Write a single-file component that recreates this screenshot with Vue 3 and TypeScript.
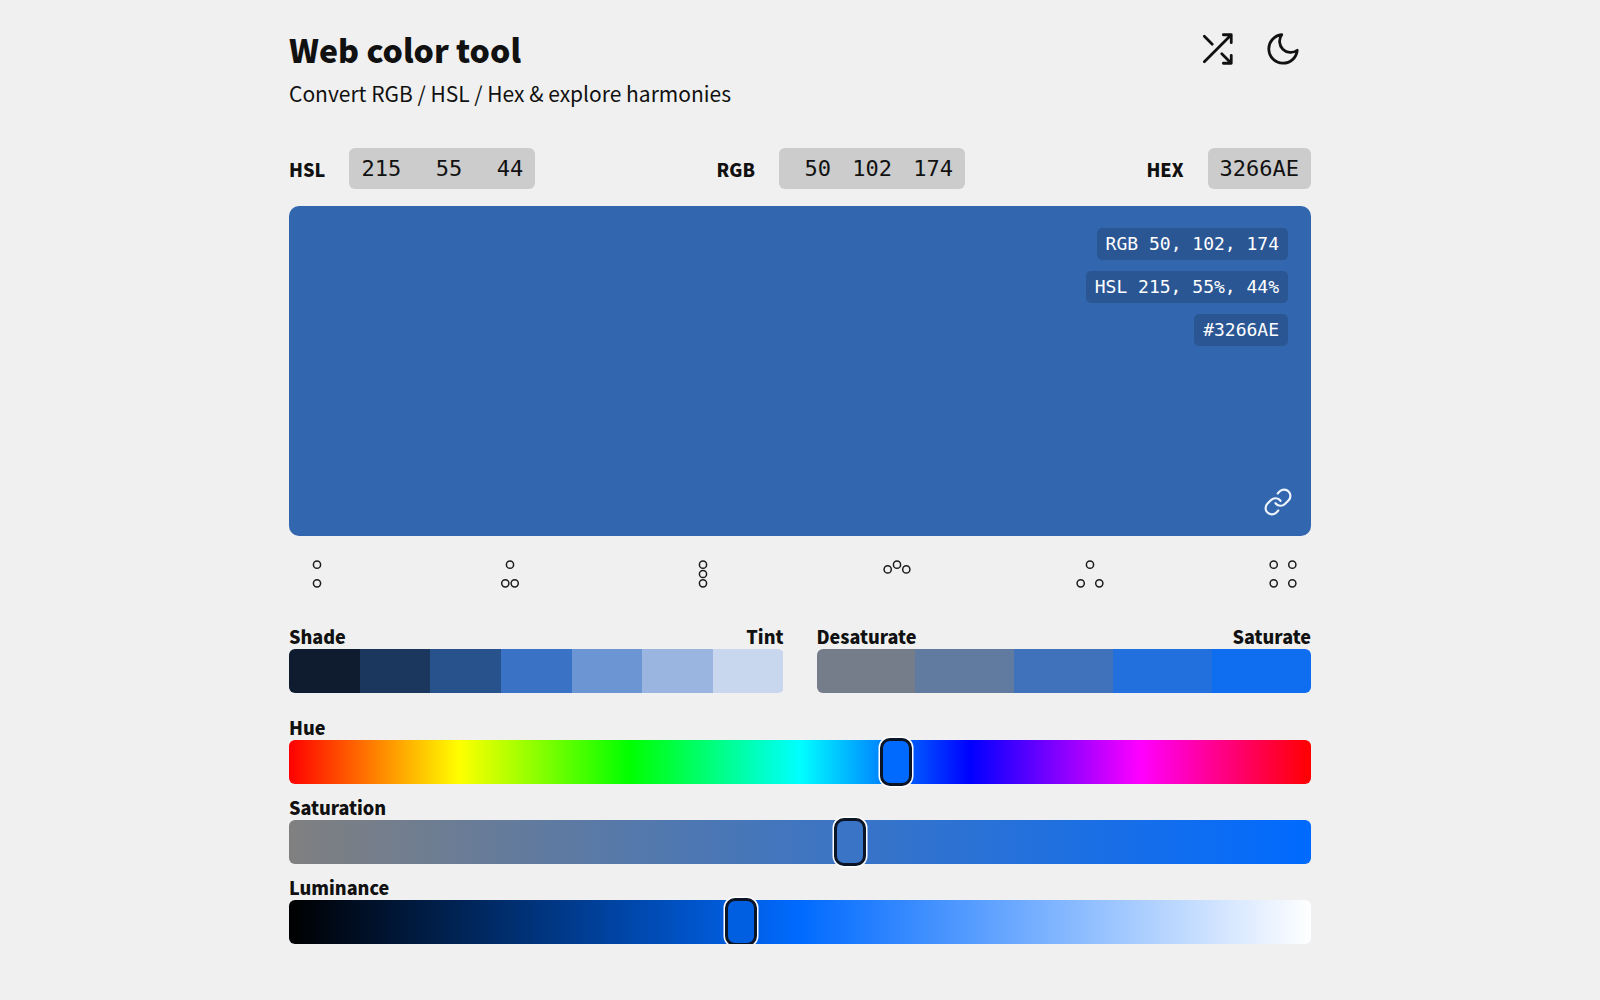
<script setup lang="ts">
import { ref, computed } from 'vue'

const hue = ref(215)
const sat = ref(55)
const lum = ref(44)

const rgb = [50, 102, 174]
const hex = '3266AE'

const hsl = (h: number, s: number, l: number) => `hsl(${h}, ${s}%, ${l}%)`

const shades = ['#0f1c2f', '#1c375e', '#28528c', '#3a73c5', '#6b95d3', '#9ab5e0', '#c8d7ed']
const saturates = ['#757c8a', '#617a9f', '#3f72ba', '#2270de', '#0f6ef0']

const sliders = computed(() => [
  {
    label: 'Hue',
    max: 360,
    value: hue.value,
    thumb: hsl(hue.value, 100, 50),
    track: 'linear-gradient(90deg, #f00 0%, #ff0 16.67%, #0f0 33.33%, #0ff 50%, #00f 66.67%, #f0f 83.33%, #f00 100%)',
  },
  {
    label: 'Saturation',
    max: 100,
    value: sat.value,
    thumb: hsl(hue.value, sat.value, 50),
    track: `linear-gradient(90deg, #808080, ${hsl(hue.value, 100, 50)})`,
  },
  {
    label: 'Luminance',
    max: 100,
    value: lum.value,
    thumb: hsl(hue.value, 100, lum.value),
    track: `linear-gradient(90deg, #000, ${hsl(hue.value, 100, 50)}, #fff)`,
  },
])

// circle centres for each harmony icon, relative to the middle of the icon
const harmonies = [
  [[0, -9.3], [0, 9.3]],
  [[0, -9.3], [-4.7, 9.3], [4.7, 9.3]],
  [[0, -9.3], [0, 0], [0, 9.3]],
  [[-9.3, -4.6], [0, -9.3], [9.3, -4.6]],
  [[0, -9.3], [-9.3, 9.3], [9.3, 9.3]],
  [[-9.3, -9.3], [9.3, -9.3], [-9.3, 9.3], [9.3, 9.3]],
]
</script>

<template>
  <main class="page">
    <header class="header">
      <div>
        <h1 class="title">Web color tool</h1>
        <p class="subtitle">Convert RGB / HSL / Hex &amp; explore harmonies</p>
      </div>
      <div class="actions">
        <button class="icon-btn" type="button" aria-label="Random color">
          <svg viewBox="0 0 24 24" width="38" height="38">
            <path d="M16 3h5v5M4 20 21 3M21 16v5h-5M15 15l6 6M4 4l5 5" />
          </svg>
        </button>
        <button class="icon-btn" type="button" aria-label="Dark mode">
          <svg viewBox="0 0 24 24" width="38" height="38">
            <path d="M21 12.79A9 9 0 1 1 11.21 3 7 7 0 0 0 21 12.79z" />
          </svg>
        </button>
      </div>
    </header>

    <section class="fields">
      <div class="field">
        <span class="field-label">HSL</span>
        <div class="field-box">
          <span class="num">{{ hue }}</span>
          <span class="num">{{ sat }}</span>
          <span class="num">{{ lum }}</span>
        </div>
      </div>
      <div class="field">
        <span class="field-label">RGB</span>
        <div class="field-box">
          <span v-for="n in rgb" :key="n" class="num">{{ n }}</span>
        </div>
      </div>
      <div class="field">
        <span class="field-label">HEX</span>
        <div class="field-box">
          <span>{{ hex }}</span>
        </div>
      </div>
    </section>

    <section class="preview">
      <span class="tag">RGB {{ rgb.join(', ') }}</span>
      <span class="tag">HSL {{ hue }}, {{ sat }}%, {{ lum }}%</span>
      <span class="tag">#{{ hex }}</span>
      <button class="link-btn" type="button" aria-label="Copy link">
        <svg viewBox="0 0 24 24" width="30" height="30">
          <path d="M10 13a5 5 0 0 0 7.54.54l3-3a5 5 0 0 0-7.07-7.07l-1.72 1.71" />
          <path d="M14 11a5 5 0 0 0-7.54-.54l-3 3a5 5 0 0 0 7.07 7.07l1.71-1.71" />
        </svg>
      </button>
    </section>

    <section class="harmonies">
      <button v-for="(dots, i) in harmonies" :key="i" class="harmony" type="button">
        <svg viewBox="-20 -20 40 40" width="40" height="40">
          <circle v-for="(d, j) in dots" :key="j" :cx="d[0]" :cy="d[1]" r="3.6" />
        </svg>
      </button>
    </section>

    <section class="swatches">
      <div class="swatch-group">
        <div class="swatch-labels"><span>Shade</span><span>Tint</span></div>
        <div class="swatch-row">
          <span v-for="c in shades" :key="c" class="swatch" :style="{ background: c }"></span>
        </div>
      </div>
      <div class="swatch-group">
        <div class="swatch-labels"><span>Desaturate</span><span>Saturate</span></div>
        <div class="swatch-row">
          <span v-for="c in saturates" :key="c" class="swatch" :style="{ background: c }"></span>
        </div>
      </div>
    </section>

    <section class="sliders">
      <label v-for="s in sliders" :key="s.label" class="slider">
        <span class="slider-label">{{ s.label }}</span>
        <input
          class="range"
          type="range"
          min="0"
          :max="s.max"
          :value="s.value"
          :style="{ background: s.track, '--thumb': s.thumb }"
        />
      </label>
    </section>
  </main>
</template>

<style>
html,
body {
  background: #f0f0f0;
}
</style>

<style scoped>
.page {
  width: 1022px;
  margin: 0 auto;
  padding-top: 24px;
  color: #111;
  font-family: "Noto Sans CJK SC", "Noto Sans", sans-serif;
}

button {
  padding: 0;
  border: 0;
  background: none;
  color: inherit;
  cursor: pointer;
}

/* header */
.header {
  display: flex;
  justify-content: space-between;
}

.title {
  margin: 0;
  font-size: 32px;
  font-weight: 900;
  line-height: 50px;
}

.subtitle {
  margin: 4px 0 0;
  font-size: 21px;
  line-height: 30px;
}

.actions {
  display: flex;
  gap: 28px;
  height: 38px;
  margin: 6px 9px 0 0;
}

.icon-btn svg,
.link-btn svg {
  display: block;
  fill: none;
  stroke: currentColor;
  stroke-width: 1.75;
  stroke-linecap: round;
  stroke-linejoin: round;
}

/* value fields */
.fields {
  display: flex;
  justify-content: space-between;
  margin-top: 40px;
}

.field {
  display: flex;
  align-items: center;
  gap: 24px;
}

.field-label {
  font-size: 18px;
  font-weight: 900;
}

.field-box {
  display: flex;
  gap: 21px;
  height: 41px;
  padding: 0 12px;
  align-items: center;
  border-radius: 6px;
  background: #ccc;
  font-family: "DejaVu Sans Mono", "Liberation Mono", monospace;
  font-size: 22px;
}

.num {
  width: 40px;
  text-align: right;
}

/* colour preview */
.preview {
  position: relative;
  display: flex;
  flex-direction: column;
  align-items: flex-end;
  gap: 11px;
  height: 330px;
  margin-top: 17px;
  padding: 22px 23px;
  box-sizing: border-box;
  border-radius: 10px;
  background: #3266ae;
}

.tag {
  height: 32px;
  padding: 0 9px;
  border-radius: 5px;
  background: rgba(0, 0, 0, 0.15);
  color: #fff;
  font-family: "DejaVu Sans Mono", "Liberation Mono", monospace;
  font-size: 18px;
  line-height: 32px;
}

.link-btn {
  position: absolute;
  right: 18px;
  bottom: 19px;
  color: #eef4fb;
}

/* harmony icons */
.harmonies {
  display: flex;
  justify-content: space-between;
  margin-top: 18px;
  padding: 0 7.5px;
}

.harmony svg {
  display: block;
  fill: none;
  stroke: #1c1c1c;
  stroke-width: 1.5;
}

/* swatches */
.swatches {
  display: grid;
  grid-template-columns: 1fr 1fr;
  gap: 33px;
  margin-top: 29px;
}

.swatch-labels {
  display: flex;
  justify-content: space-between;
  font-size: 18px;
  font-weight: 900;
  line-height: 26px;
}

.swatch-row {
  display: flex;
  height: 44px;
  overflow: hidden;
  border-radius: 6px;
}

.swatch {
  flex: 1;
}

/* sliders */
.sliders {
  display: flex;
  flex-direction: column;
  gap: 10px;
  margin-top: 21px;
}

.slider {
  display: block;
}

.slider-label {
  display: block;
  font-size: 18px;
  font-weight: 900;
  line-height: 26px;
}

.range {
  display: block;
  width: 100%;
  height: 44px;
  margin: 0;
  border-radius: 6px;
  overflow: visible;
  outline: none;
  appearance: none;
  -webkit-appearance: none;
}

.range::-webkit-slider-thumb {
  width: 32px;
  height: 48px;
  box-sizing: border-box;
  border: 3px solid #0b1526;
  border-radius: 10px;
  background: var(--thumb);
  box-shadow: 0 0 0 1.5px #fff;
  appearance: none;
  -webkit-appearance: none;
}
</style>
